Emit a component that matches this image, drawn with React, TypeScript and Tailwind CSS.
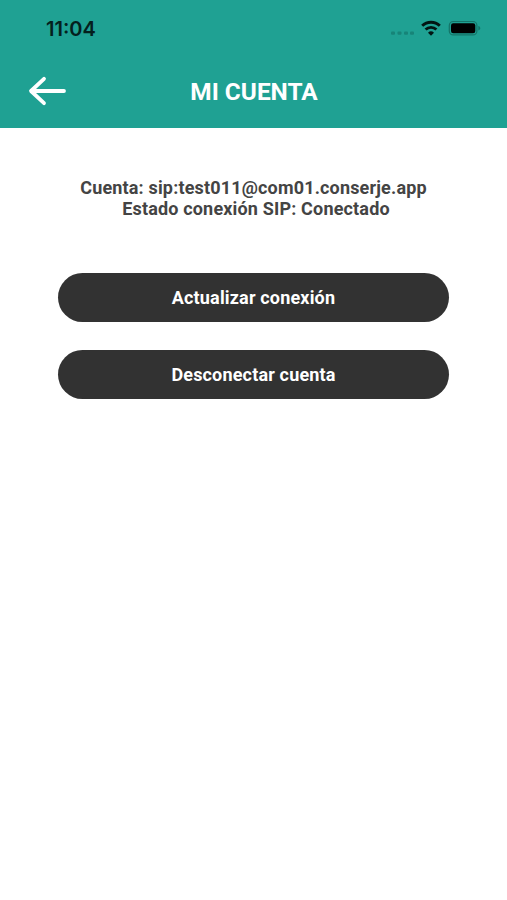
import React from 'react';

const actions = [{ label: 'Actualizar conexión' }, { label: 'Desconectar cuenta' }];

const StatusBar = () => (
  <div className="flex h-14 items-center justify-between pl-[46px] pr-[26px]">
    <span className="pt-0.5 font-['Inter',sans-serif] text-xl font-semibold leading-6 text-[#04201d]">11:04</span>
    <div className="flex items-center">
      {/* Signal, wifi and battery */}
      <svg width="91" height="20" viewBox="0 0 91 20" fill="none">
        <g fill="#178478">
          <rect x="1" y="13.4" width="4" height="3.4" rx="1" />
          <rect x="7.5" y="13.4" width="4" height="3.4" rx="1" />
          <rect x="14" y="13.4" width="4" height="3.4" rx="1" />
          <rect x="20" y="13.4" width="4" height="3.4" rx="1" />
        </g>
        <g stroke="#021513" strokeWidth="2.9">
          <path d="M32.2 7.8a12.6 12.6 0 0 1 17.6 0" />
          <path d="M35.6 11.5a7.8 7.8 0 0 1 10.8 0" />
        </g>
        <path d="M41 17.8l-3-3.1a4.4 4.4 0 0 1 6 0z" fill="#021513" />
        <rect x="59.3" y="3.5" width="27.6" height="13.4" rx="4" stroke="#147468" strokeWidth="1.2" />
        <rect x="61" y="5.2" width="24.3" height="10" rx="2.2" fill="#000" />
        <path d="M88.3 8c1.2.4 2 1.2 2 2.2s-.8 1.8-2 2.2z" fill="#147468" />
      </svg>
    </div>
  </div>
);

const Header = () => (
  <header className="h-[127.5px] bg-[#1fa193]">
    <StatusBar />
    <div className="grid h-[70px] grid-cols-[80px_1fr_80px] items-center">
      <button type="button" aria-label="Volver" className="pl-7">
        <svg width="40" height="32" viewBox="0 0 40 32" fill="none" stroke="#fff" strokeWidth="3.8" strokeLinecap="round" strokeLinejoin="round">
          <path d="M16 3.8L3 16l13 12.2M3.5 16H36" />
        </svg>
      </button>
      <h1 className="pt-0.5 pl-px text-center text-[24.4px] font-bold text-white">MI CUENTA</h1>
    </div>
  </header>
);

const App = () => {
  return (
    <div className="min-h-screen bg-white font-['Roboto',sans-serif]">
      <Header />
      <main className="px-[58px] pt-[49px]">
        <div className="text-center text-lg font-bold leading-[21px] tracking-[0.17px] text-[#444]">
          <p>Cuenta: sip:test011@com01.conserje.app</p>
          <p className="pl-[5px]">Estado conexión SIP: Conectado</p>
        </div>
        <div className="mt-[54px] flex flex-col gap-7">
          {actions.map((action) => (
            <button
              key={action.label}
              type="button"
              className="h-[49px] rounded-full bg-[#323232] pt-px text-lg font-bold tracking-[0.17px] text-white"
            >
              {action.label}
            </button>
          ))}
        </div>
      </main>
    </div>
  );
};

export default App;
